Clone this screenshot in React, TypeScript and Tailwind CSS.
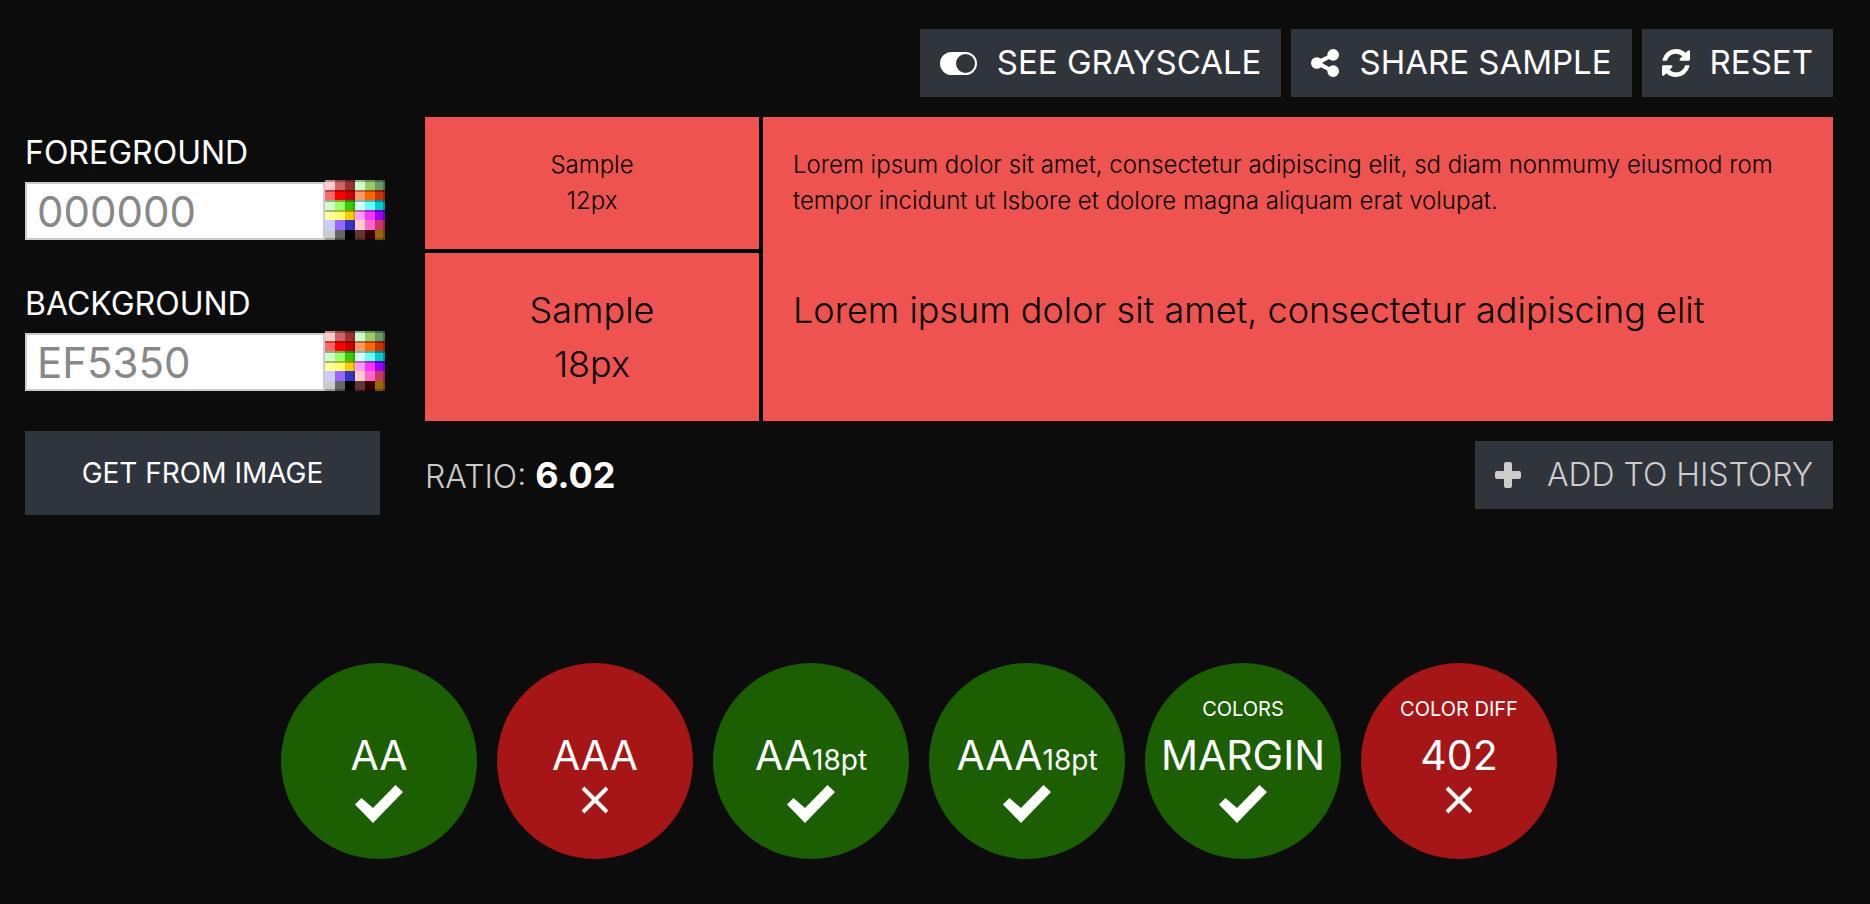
import type { ReactNode } from "react";

const swatches = [
  ["#ffcccc", "#cc6666", "#993333", "#ccffcc", "#99cc66", "#669966"],
  ["#ff6666", "#ff0000", "#cc0000", "#ff9966", "#ff6600", "#cc3300"],
  ["#ccffcc", "#99ff66", "#33cc00", "#ccffff", "#66ffff", "#00cccc"],
  ["#ffff99", "#ffff66", "#ffcc00", "#ff99ff", "#ff33ff", "#9900ff"],
  ["#ccccff", "#9966ff", "#3333cc", "#ffcccc", "#ff66cc", "#cc3366"],
  ["#cccccc", "#666666", "#000000", "#663333", "#330000", "#996600"],
];

function PaletteIcon() {
  return (
    <svg viewBox="0 0 60 60" className="block size-[60px]" aria-hidden="true">
      {swatches.map((row, y) =>
        row.map((fill, x) => (
          <rect key={`${x}-${y}`} x={x * 10} y={y * 10} width="10" height="10" fill={fill} />
        )),
      )}
      {[0, 10, 20, 30].map((y) => (
        <rect key={y} y={y} width="60" height="2" fill="#000" opacity="0.3" />
      ))}
      <rect x="28" width="2" height="60" fill="#000" opacity="0.15" />
      <rect x="58" width="2" height="60" fill="#000" opacity="0.25" />
      <rect y="58" width="60" height="2" fill="#000" opacity="0.25" />
    </svg>
  );
}

function ToggleIcon() {
  return (
    <svg viewBox="0 0 37 23" className="h-[23px] w-[37px]" aria-hidden="true">
      <path
        fill="currentColor"
        fillRule="evenodd"
        d="M11.5 0h14a11.5 11.5 0 0 1 0 23h-14a11.5 11.5 0 0 1 0-23zM25.5 2a9.5 9.5 0 1 0 0 19a9.5 9.5 0 0 0 0-19z"
      />
    </svg>
  );
}

function ShareIcon() {
  return (
    <svg viewBox="128 128 1536 1536" className="size-7" aria-hidden="true">
      <path
        fill="currentColor"
        d="M1344 1024q133 0 226.5 93.5t93.5 226.5-93.5 226.5-226.5 93.5-226.5-93.5-93.5-226.5q0-12 2-34l-360-180q-92 86-218 86-133 0-226.5-93.5t-93.5-226.5 93.5-226.5 226.5-93.5q126 0 218 86l360-180q-2-22-2-34 0-133 93.5-226.5t226.5-93.5 226.5 93.5 93.5 226.5-93.5 226.5-226.5 93.5q-126 0-218-86l-360 180q2 22 2 34t-2 34l360 180q92-86 218-86z"
      />
    </svg>
  );
}

function RefreshIcon() {
  return (
    <svg viewBox="0 0 1536 1536" className="size-7" aria-hidden="true">
      <path
        fill="currentColor"
        d="M1511 928q0 5-1 7-64 268-268 434.5t-478 166.5q-146 0-282.5-55t-243.5-157l-129 129q-19 19-45 19t-45-19-19-45v-448q0-26 19-45t45-19h448q26 0 45 19t19 45-19 45l-137 137q71 66 161 102t187 36q134 0 250-65t186-179q11-17 53-117 8-23 30-23h192q13 0 22.5 9.5t9.5 22.5zm25-800v448q0 26-19 45t-45 19h-448q-26 0-45-19t-19-45 19-45l138-138q-148-137-349-137-134 0-250 65t-186 179q-11 17-53 117-8 23-30 23h-199q-13 0-22.5-9.5t-9.5-22.5v-7q65-268 270-434.5t480-166.5q146 0 284 55.5t245 156.5l130-129q19-19 45-19t45 19 19 45z"
      />
    </svg>
  );
}

function PlusIcon() {
  return (
    <svg viewBox="0 0 26 26" className="mr-1.5 size-[26px]" aria-hidden="true">
      <path
        fill="currentColor"
        d="M11 0h4a2 2 0 0 1 2 2v7h7a2 2 0 0 1 2 2v4a2 2 0 0 1-2 2h-7v7a2 2 0 0 1-2 2h-4a2 2 0 0 1-2-2v-7H2a2 2 0 0 1-2-2v-4a2 2 0 0 1 2-2h7V2a2 2 0 0 1 2-2z"
      />
    </svg>
  );
}

function ToolButton({ icon, muted, children }: { icon: ReactNode; muted?: boolean; children: ReactNode }) {
  return (
    <button
      type="button"
      className={`flex h-[68px] items-center gap-5 whitespace-nowrap bg-[#30353b] px-5 ${muted ? "text-[32px] font-light text-[#cccccc]" : "text-[33px] text-white"}`}
    >
      {icon}
      {children}
    </button>
  );
}

function ColorField({ id, label, value }: { id: string; label: string; value: string }) {
  return (
    <div className="flex flex-col gap-[3px]">
      <label htmlFor={id} className="text-[32px] leading-[48px] text-white">
        {label}
      </label>
      <div className="flex items-end">
        <input
          id={id}
          defaultValue={value}
          className="h-[58px] w-[300px] border-2 border-[#cccccc] bg-white px-[10px] text-[42px] text-[#888888]"
        />
        <button type="button" aria-label={`Pick ${label.toLowerCase()} color`}>
          <PaletteIcon />
        </button>
      </div>
    </div>
  );
}

type Result = { caption?: string; text: string; size?: string; pass: boolean };

const results: Result[] = [
  { text: "AA", pass: true },
  { text: "AAA", pass: false },
  { text: "AA", size: "18pt", pass: true },
  { text: "AAA", size: "18pt", pass: true },
  { caption: "COLORS", text: "MARGIN", pass: true },
  { caption: "COLOR DIFF", text: "402", pass: false },
];

function ResultBadge({ caption, text, size, pass }: Result) {
  return (
    <li
      className={`flex size-[196px] shrink-0 flex-col items-center whitespace-nowrap rounded-full pt-[30px] text-white ${pass ? "bg-[#1b5f02]" : "bg-[#a61616]"}`}
    >
      <span className="h-8 text-[20px] leading-[32px]">{caption}</span>
      <span className="h-[60px] text-[41px] leading-[60px]">
        {text}
        {size && <span className="text-[28px]">{size}</span>}
      </span>
      <svg viewBox="0 0 48 38" className="h-[38px] w-12" role="img" aria-label={pass ? "Pass" : "Fail"}>
        {pass ? (
          <path d="M0 19.5L6.500 13L18 23L40.500 0L48 7L18 38z" fill="currentColor" />
        ) : (
          <path d="M12 3L36 27M36 3L12 27" stroke="currentColor" strokeWidth="4" />
        )}
      </svg>
    </li>
  );
}

export default function App() {
  return (
    <div className="min-h-screen bg-[#0c0c0c] pb-10 pl-[25px] pr-[37px] pt-[29px] font-['Inter','Liberation_Sans',sans-serif] font-normal">
      <header className="flex justify-end gap-[10px]">
        <ToolButton icon={<ToggleIcon />}>SEE GRAYSCALE</ToolButton>
        <ToolButton icon={<ShareIcon />}>SHARE SAMPLE</ToolButton>
        <ToolButton icon={<RefreshIcon />}>RESET</ToolButton>
      </header>

      <main>
        <div className="flex gap-10 pt-5">
          <aside className="flex w-[360px] shrink-0 flex-col gap-10 pt-3">
            <ColorField id="foreground" label="FOREGROUND" value="000000" />
            <ColorField id="background" label="BACKGROUND" value="EF5350" />
            <button type="button" className="mr-[5px] h-[84px] bg-[#2f353c] text-[28px] text-white">
              GET FROM IMAGE
            </button>
          </aside>

          <section className="flex min-w-0 flex-1 flex-col gap-5">
            <div className="grid grid-cols-[334px_1fr] gap-1 bg-black font-light text-black">
              <div className="grid gap-1 text-center">
                <p className="bg-[#ef5350] p-[30px] text-[24px] leading-[36px]">
                  Sample
                  <br />
                  12px
                </p>
                <p className="bg-[#ef5350] p-[30px] text-[36px] leading-[54px]">
                  Sample
                  <br />
                  18px
                </p>
              </div>
              <div className="flex flex-col gap-16 bg-[#ef5350] p-[30px]">
                <p className="text-[24px] leading-[36px]">
                  Lorem ipsum dolor sit amet, consectetur adipiscing elit, sd diam nonmumy eiusmod rom tempor incidunt
                  ut lsbore et dolore magna aliquam erat volupat.
                </p>
                <p className="text-[36px] leading-[54px]">Lorem ipsum dolor sit amet, consectetur adipiscing elit</p>
              </div>
            </div>
            <div className="flex items-center justify-between">
              <p className="text-[32px] font-light text-[#cccccc]">
                RATIO: <strong className="text-[36px] font-bold text-white">6.02</strong>
              </p>
              <ToolButton icon={<PlusIcon />} muted>
                ADD TO HISTORY
              </ToolButton>
            </div>
          </section>
        </div>

        <ul className="flex justify-center gap-5 pr-5 pt-[148px]">
          {results.map((result) => (
            <ResultBadge key={result.text + (result.size ?? "")} {...result} />
          ))}
        </ul>
      </main>
    </div>
  );
}
